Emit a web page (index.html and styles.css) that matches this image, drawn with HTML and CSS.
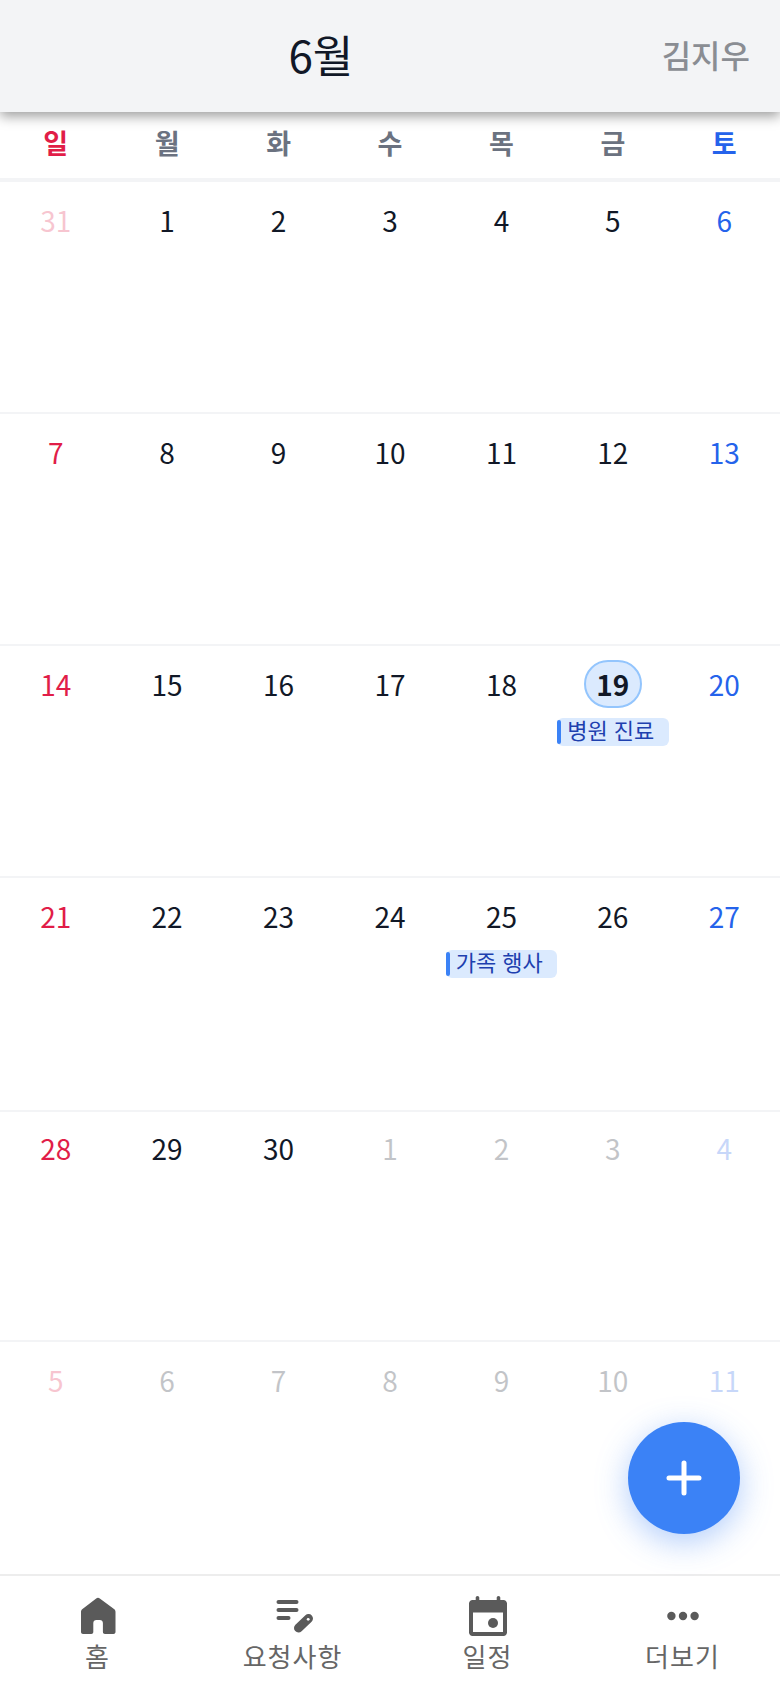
FILE: index.html
```html
<!DOCTYPE html>
<html lang="ko">
<head>
<meta charset="utf-8">
<title>일정</title>
<link rel="stylesheet" href="styles.css">
</head>
<body>
<div class="app">
  <header class="top">
    <h1 class="month">6월</h1>
    <span class="user">김지우</span>
  </header>
  <div class="weekdays">
    <div class="wd sun">일</div><div class="wd">월</div><div class="wd">화</div><div class="wd">수</div><div class="wd">목</div><div class="wd">금</div><div class="wd sat">토</div>
  </div>
  <main class="grid">
    <div class="week">
      <div class="cell sun dim"><span class="num">31</span></div><div class="cell"><span class="num">1</span></div><div class="cell"><span class="num">2</span></div><div class="cell"><span class="num">3</span></div><div class="cell"><span class="num">4</span></div><div class="cell"><span class="num">5</span></div><div class="cell sat"><span class="num">6</span></div>
    </div>
    <div class="week">
      <div class="cell sun"><span class="num">7</span></div><div class="cell"><span class="num">8</span></div><div class="cell"><span class="num">9</span></div><div class="cell"><span class="num">10</span></div><div class="cell"><span class="num">11</span></div><div class="cell"><span class="num">12</span></div><div class="cell sat"><span class="num">13</span></div>
    </div>
    <div class="week">
      <div class="cell sun"><span class="num">14</span></div><div class="cell"><span class="num">15</span></div><div class="cell"><span class="num">16</span></div><div class="cell"><span class="num">17</span></div><div class="cell"><span class="num">18</span></div><div class="cell"><span class="num today">19</span><div class="event">병원 진료</div></div><div class="cell sat"><span class="num">20</span></div>
    </div>
    <div class="week">
      <div class="cell sun"><span class="num">21</span></div><div class="cell"><span class="num">22</span></div><div class="cell"><span class="num">23</span></div><div class="cell"><span class="num">24</span></div><div class="cell"><span class="num">25</span><div class="event">가족 행사</div></div><div class="cell"><span class="num">26</span></div><div class="cell sat"><span class="num">27</span></div>
    </div>
    <div class="week week-after-tall">
      <div class="cell sun"><span class="num">28</span></div><div class="cell"><span class="num">29</span></div><div class="cell"><span class="num">30</span></div><div class="cell dim"><span class="num">1</span></div><div class="cell dim"><span class="num">2</span></div><div class="cell dim"><span class="num">3</span></div><div class="cell sat dim"><span class="num">4</span></div>
    </div>
    <div class="week">
      <div class="cell sun dim"><span class="num">5</span></div><div class="cell dim"><span class="num">6</span></div><div class="cell dim"><span class="num">7</span></div><div class="cell dim"><span class="num">8</span></div><div class="cell dim"><span class="num">9</span></div><div class="cell dim"><span class="num">10</span></div><div class="cell sat dim"><span class="num">11</span></div>
    </div>
  </main>
  <button class="fab" type="button" aria-label="추가">
    <svg class="fab-icon" viewBox="0 0 36 36"><path d="M18 3v30M3 18h30"/></svg>
  </button>
  <nav class="nav">
    <div class="tab">
      <svg class="ico" viewBox="0 0 40 40"><path d="M21.800 2.400l14.200 10.700c.9.700 1.500 1.800 1.500 3v20c0 1.100-.9 2-2 2h-8.600c-1.100 0-2-.9-2-2v-9c0-1.700-1.300-3-3-3h-3.600c-1.700 0-3 1.300-3 3v9c0 1.100-.9 2-2 2H5c-1.100 0-2-.9-2-2v-20c0-1.200.6-2.300 1.500-3L18.200 2.400c1.100-.8 2.500-.8 3.600 0z"/></svg>
      <span class="lbl">홈</span>
    </div>
    <div class="tab">
      <svg class="ico" viewBox="0 0 40 40"><rect x="3.500" y="4" width="22" height="4" rx="2"/><rect x="3.500" y="12" width="22" height="4" rx="2"/><rect x="3.500" y="20" width="14" height="4" rx="2"/><path class="pen" d="M25.500 32l10-9.500"/><circle cx="35.200" cy="23.300" r="1.400" fill="#fff"/></svg>
      <span class="lbl">요청사항</span>
    </div>
    <div class="tab">
      <svg class="ico" viewBox="0 0 40 40"><path fill-rule="evenodd" d="M9.500 0c1 0 1.800.8 1.800 1.800V4h17.400V1.800c0-1 .8-1.800 1.800-1.800s1.800.8 1.800 1.800V4h3.200C37.400 4 39 5.600 39 7.500v29c0 1.900-1.600 3.500-3.500 3.500h-31C2.600 40 1 38.400 1 36.500v-29C1 5.600 2.600 4 4.500 4h3.200V1.800C7.700.8 8.500 0 9.500 0zM5 16.500V36h30V16.500H5z"/><circle cx="25" cy="27" r="5"/></svg>
      <span class="lbl">일정</span>
    </div>
    <div class="tab">
      <svg class="ico" viewBox="0 0 40 40"><circle cx="8.400" cy="20" r="4.200"/><circle cx="20" cy="20" r="4.200"/><circle cx="31.600" cy="20" r="4.200"/></svg>
      <span class="lbl">더보기</span>
    </div>
  </nav>
</div>
</body>
</html>
```
FILE: styles.css
```css
* { box-sizing: border-box; }
html, body { margin: 0; padding: 0; }
body {
  background: #fff;
  font-family: "Noto Sans CJK KR", "Noto Sans", sans-serif;
  color: #111827;
}
.app {
  position: relative;
  width: 780px;
  height: 1688px;
  display: flex;
  flex-direction: column;
  overflow: hidden;
}
.top {
  position: relative;
  z-index: 2;
  height: 112px;
  flex: none;
  background: #f3f4f6;
  box-shadow: 0 4px 12px rgba(0, 0, 0, .4);
  display: flex;
  align-items: center;
  padding: 0 30px 4px 0;
}
.month {
  flex: 1;
  margin: 0;
  padding-right: 20px;
  text-align: center;
  font-size: 44px;
  font-weight: 400;
  color: #111827;
}
.user {
  font-size: 32px;
  font-weight: 500;
  color: #8a8d93;
}
.weekdays {
  height: 70px;
  flex: none;
  display: grid;
  grid-template-columns: repeat(7, 1fr);
  padding-bottom: 6px;
  border-bottom: 4px solid #f3f4f6;
}
.wd {
  display: flex;
  align-items: center;
  justify-content: center;
  font-size: 27px;
  font-weight: 700;
  color: #6b7280;
}
.wd.sun { color: #e11d48; }
.wd.sat { color: #2563eb; }
.grid {
  flex: 1;
  display: grid;
  grid-template-rows: 232px 232px 232px 234px 230px 232px;
  align-content: start;
}
.week {
  display: grid;
  grid-template-columns: repeat(7, 1fr);
  border-bottom: 2px solid #f3f4f6;
}
.week:last-child { border-bottom: 0; }
.cell {
  display: flex;
  flex-direction: column;
  align-items: center;
  padding-top: 14px;
  color: #111827;
}
.week-after-tall .cell { padding-top: 12px; }
.cell.sun { color: #e11d48; }
.cell.sat { color: #2563eb; }
.cell.dim .num { opacity: .25; }
.num {
  height: 48px;
  min-width: 58px;
  display: flex;
  align-items: center;
  justify-content: center;
  font-size: 28px;
  line-height: 1;
  border-radius: 24px;
}
.num.today {
  font-weight: 700;
  background: #dbeafe;
  border: 2px solid #93c5fd;
}
.event {
  align-self: stretch;
  height: 28px;
  margin-top: 10px;
  padding: 2px 0;
  display: flex;
  gap: 6px;
  background: #dbeafe;
  border-radius: 6px;
  font-size: 22px;
  line-height: 18px;
  color: #1e40af;
  white-space: nowrap;
}
.event::before {
  content: "";
  flex: none;
  width: 4px;
  border-radius: 2px;
  background: #3b82f6;
}
.fab {
  position: absolute;
  right: 40px;
  bottom: 154px;
  width: 112px;
  height: 112px;
  padding: 0;
  border: 0;
  border-radius: 50%;
  background: #3b82f6;
  box-shadow: 0 8px 32px rgba(59, 130, 246, .4);
  display: flex;
  align-items: center;
  justify-content: center;
}
.fab-icon {
  width: 36px;
  height: 36px;
  fill: none;
  stroke: #fff;
  stroke-width: 5;
  stroke-linecap: round;
}
.nav {
  height: 114px;
  flex: none;
  background: #fff;
  border-top: 2px solid #ededed;
  display: grid;
  grid-template-columns: repeat(4, 1fr);
}
.tab {
  display: flex;
  flex-direction: column;
  align-items: center;
  padding-top: 20px;
  color: #666;
}
.ico {
  width: 40px;
  height: 40px;
  fill: #5a5a5a;
}
.pen {
  fill: none;
  stroke: #5a5a5a;
  stroke-width: 9;
  stroke-linecap: round;
}
.lbl {
  margin-top: 4px;
  font-size: 26px;
  line-height: 32px;
  letter-spacing: 1px;
}
```
